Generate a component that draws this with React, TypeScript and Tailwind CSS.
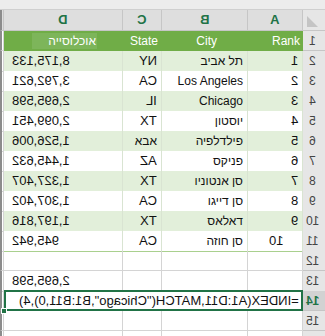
import type { ReactNode } from "react";

interface CityRow {
  rank: string;
  city: string;
  state: string;
  pop: string;
  stateHe?: boolean;
}

const cities: CityRow[] = [
  { rank: "1", city: "תל אביב", state: "NY", pop: "8,175,133" },
  { rank: "2", city: "Los Angeles", state: "CA", pop: "3,792,621" },
  { rank: "3", city: "Chicago", state: "IL", pop: "2,695,598" },
  { rank: "4", city: "יוסטון", state: "TX", pop: "2,099,451" },
  { rank: "5", city: "פילדלפיה", state: "אבא", pop: "1,526,006", stateHe: true },
  { rank: "6", city: "פניקס", state: "AZ", pop: "1,445,632" },
  { rank: "7", city: "סן אנטוניו", state: "TX", pop: "1,327,407" },
  { rank: "8", city: "סן דייגו", state: "CA", pop: "1,307,402" },
  { rank: "9", city: "דאלאס", state: "TX", pop: "1,197,816" },
  { rank: "10", city: "סן חוזה", state: "CA", pop: "945,942" },
];

const cols = "grid grid-cols-[4px_119px_39px_86px_55px_22px]";

// text that shows up flipped in the sheet
function Flip({ children }: { children: ReactNode }) {
  return <span className="inline-block -scale-x-100 whitespace-nowrap">{children}</span>;
}

function RowHead({ n, active }: { n?: number; active?: boolean }) {
  return (
    <div
      className={
        active
          ? "flex items-center justify-center pr-[3px] bg-[#d2d2d2] border-b border-[#c6c6c6] text-[#217346] font-bold text-[12px]"
          : "flex items-center justify-center pr-[3px] bg-[#e6e6e6] border-b border-[#c6c6c6] text-[#444] text-[12px]"
      }
    >
      {n !== undefined && <Flip>{n}</Flip>}
    </div>
  );
}

function Strip() {
  return <div className="border-l-2 border-[#8c8c8c] border-r border-r-[#d4d4d4] border-b border-b-[#d4d4d4]" />;
}

function Empty() {
  return <div className="border-r border-b border-[#d4d4d4]" />;
}

export default function App() {
  return (
    <div className="w-[325px] h-[336px] overflow-hidden bg-white font-['Liberation_Sans','Noto_Sans',Arial,sans-serif] text-[#111] relative">
      <div className="h-[10px] bg-[#ececec] border-b border-[#cfcfcf]" />

      {/* column letters */}
      <div className={`${cols} h-[21px] bg-[#dedede] text-[#217346] font-bold text-[13px]`}>
        <div className="border-l-2 border-[#8c8c8c] border-r border-r-[#c6c6c6] border-b border-b-[#c6c6c6]" />
        {["D", "C", "B", "A"].map((l) => (
          <div key={l} className="flex items-center justify-center border-r border-b border-[#c6c6c6]">
            <Flip>{l}</Flip>
          </div>
        ))}
        <div className="bg-[#e6e6e6] border-b border-[#c6c6c6] flex items-end pl-[4px] pb-[3px]">
          <svg width="11" height="11" viewBox="0 0 11 11">
            <path d="M0 0 L0 11 L11 11 Z" fill="#c4c4c4" />
          </svg>
        </div>
      </div>

      {/* table header */}
      <div className={`${cols} h-[20px] text-white text-[12px]`}>
        <Strip />
        <div className="bg-[#70ad47] flex items-center justify-end pr-[26px] border-b border-[#70ad47]">
          <span dir="rtl" className="bg-[#7db55a] pl-[16px] pr-[1px] leading-[16px]">
            אוכלוסייה
          </span>
        </div>
        <div className="bg-[#70ad47] flex items-center justify-end pr-[4px]">State</div>
        <div className="bg-[#70ad47] flex items-center justify-end pr-[31px]">City</div>
        <div className="bg-[#70ad47] flex items-center justify-end pr-[3px]">Rank</div>
        <RowHead n={1} />
      </div>

      {cities.map((c, i) => {
        const band = i % 2 === 0 ? "bg-[#e2efda]" : "bg-white";
        const cell = `${band} border-b border-[#a9d08e] border-r border-r-[#d9e4d2] flex items-center`;
        return (
          <div key={c.rank} className={`${cols} h-[20px]`}>
            <Strip />
            <div className={`${cell} pl-[8px] text-[13px]`}>
              <Flip>{c.pop}</Flip>
            </div>
            <div className={`${cell} justify-end pr-[4px] text-[13px]`}>
              {c.stateHe ? (
                <span dir="rtl" className="text-[12px] whitespace-nowrap">{c.state}</span>
              ) : (
                <Flip>{c.state}</Flip>
              )}
            </div>
            <div className={`${cell} justify-end pr-[4px] text-[12px]`}>
              <span dir="auto" className="whitespace-nowrap">{c.city}</span>
            </div>
            <div className={`${cell} justify-end text-[13px] ${c.rank === "10" ? "pr-[19px]" : "pr-[4px]"}`}>
              <Flip>{c.rank}</Flip>
            </div>
            <RowHead n={i + 2} />
          </div>
        );
      })}

      {/* row 12 */}
      <div className={`${cols} h-[20px]`}>
        <Strip />
        <Empty />
        <Empty />
        <Empty />
        <Empty />
        <RowHead n={12} />
      </div>

      {/* row 13 */}
      <div className={`${cols} h-[20px]`}>
        <Strip />
        <div className="border-r border-b border-[#d4d4d4] flex items-center pl-[8px] text-[13px]">
          <Flip>2,695,598</Flip>
        </div>
        <Empty />
        <Empty />
        <Empty />
        <RowHead n={13} />
      </div>

      {/* row 14 with the formula */}
      <div className={`${cols} h-[20px] relative`}>
        <Strip />
        <div className="col-span-4 border-2 border-[#217346] bg-white flex items-center justify-end pr-[2px] text-[13px] -mt-[1px] h-[21px]">
          <Flip>=INDEX(A1:D11,MATCH("Chicago",B1:B11,0),4)</Flip>
        </div>
        <RowHead n={14} active />
        <div className="absolute left-[1px] bottom-[-3px] w-[6px] h-[6px] bg-[#217346] border border-white" />
      </div>

      <div className={`${cols} h-[20px]`}>
        <Strip />
        <Empty />
        <Empty />
        <Empty />
        <Empty />
        <RowHead n={15} />
      </div>
      <div className={`${cols} h-[20px]`}>
        <Strip />
        <Empty />
        <Empty />
        <Empty />
        <Empty />
        <RowHead />
      </div>
    </div>
  );
}
